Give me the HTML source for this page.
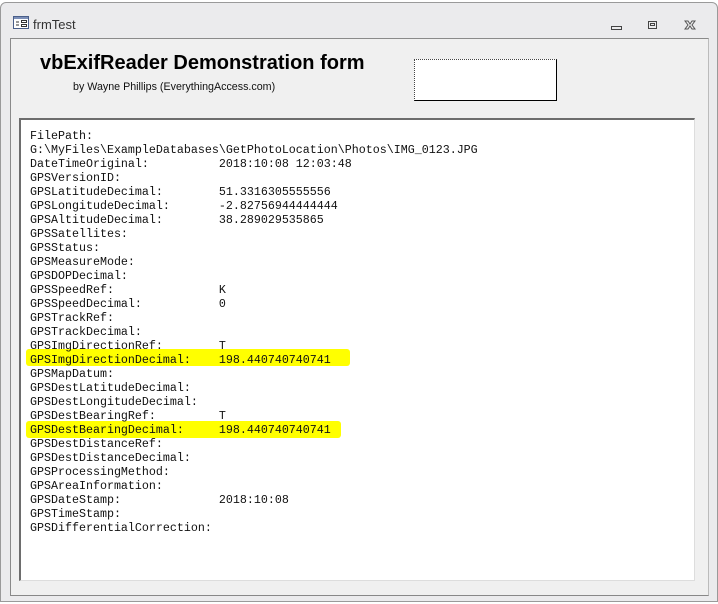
<!DOCTYPE html>
<html><head><style>
body{margin:0;width:718px;height:604px;background:#fff;position:relative;overflow:hidden;font-family:"Liberation Sans",sans-serif}
.win{position:absolute;left:0;top:2px;width:716px;height:598px;background:#ebebed;border:1px solid #9a9a9a;border-radius:6px 6px 0 0}
.title{position:absolute;left:32px;top:14px;font-size:13px;color:#333}
.frame{position:absolute;left:9px;top:35px;width:697px;height:556px;background:#f0f0f0;border:1px solid #8a8a8a;border-right:1px solid #bbb;border-bottom:1px solid #888}
.h1{position:absolute;left:40px;top:52px;font-size:20px;font-weight:bold;color:#000}
.sub{position:absolute;left:73px;top:81px;font-size:10.7px;color:#111}
.box{position:absolute;left:414px;top:59px;width:141px;height:40px;background:#fff;border:1px solid #000;border-top:1px dotted #444;border-left:1px dotted #444}
.txt{position:absolute;left:19px;top:118px;width:673px;height:460px;background:#fff;border-left:2px solid #6d6d6d;border-top:2px solid #6d6d6d;border-right:1px solid #ddd;border-bottom:1px solid #ddd}
pre{position:absolute;left:30px;top:129px;margin:0;font-family:"Liberation Mono",monospace;font-size:11.67px;line-height:14px;color:#111}
.hl{position:absolute;background:#ffff00;border-radius:3px}
</style></head><body>
<div class="win">
<svg style="position:absolute;left:12px;top:13px" width="16" height="13"><rect x="0.5" y="0.5" width="15" height="12" fill="#fff" stroke="#4a5f8a"/><rect x="1" y="1" width="14" height="2" fill="#7c8fb8"/><line x1="3" y1="6" x2="6" y2="6" stroke="#333"/><line x1="3" y1="9" x2="6" y2="9" stroke="#333"/><rect x="8.5" y="4.5" width="5" height="2" fill="none" stroke="#333"/><rect x="8.5" y="8.5" width="5" height="2" fill="none" stroke="#333"/></svg>
<div class="title">frmTest</div>
<svg style="position:absolute;left:609px;top:17px" width="95" height="12"><rect x="1.5" y="6.5" width="10" height="3" fill="none" stroke="#444"/><rect x="38.5" y="1.5" width="8" height="7" fill="none" stroke="#444"/><rect x="40.5" y="3.5" width="4" height="2" fill="none" stroke="#444"/><path d="M75 1l3 0 2 3 2-3 3 0-3 4 3 4-3 0-2-3-2 3-3 0 3-4z" fill="none" stroke="#555"/></svg>
<div class="frame"></div>
</div>
<div class="h1">vbExifReader Demonstration form</div>
<div class="sub">by Wayne Phillips (EverythingAccess.com)</div>
<div class="box"></div>
<div class="txt"></div>
<div class="hl" style="left:26px;top:349px;width:324px;height:17px"></div>
<div class="hl" style="left:26px;top:421px;width:315px;height:17px"></div>
<pre>FilePath:
G:\MyFiles\ExampleDatabases\GetPhotoLocation\Photos\IMG_0123.JPG
DateTimeOriginal:          2018:10:08 12:03:48
GPSVersionID:
GPSLatitudeDecimal:        51.3316305555556
GPSLongitudeDecimal:       -2.82756944444444
GPSAltitudeDecimal:        38.289029535865
GPSSatellites:
GPSStatus:
GPSMeasureMode:
GPSDOPDecimal:
GPSSpeedRef:               K
GPSSpeedDecimal:           0
GPSTrackRef:
GPSTrackDecimal:
GPSImgDirectionRef:        T
GPSImgDirectionDecimal:    198.440740740741
GPSMapDatum:
GPSDestLatitudeDecimal:
GPSDestLongitudeDecimal:
GPSDestBearingRef:         T
GPSDestBearingDecimal:     198.440740740741
GPSDestDistanceRef:
GPSDestDistanceDecimal:
GPSProcessingMethod:
GPSAreaInformation:
GPSDateStamp:              2018:10:08
GPSTimeStamp:
GPSDifferentialCorrection:</pre>
</body></html>
